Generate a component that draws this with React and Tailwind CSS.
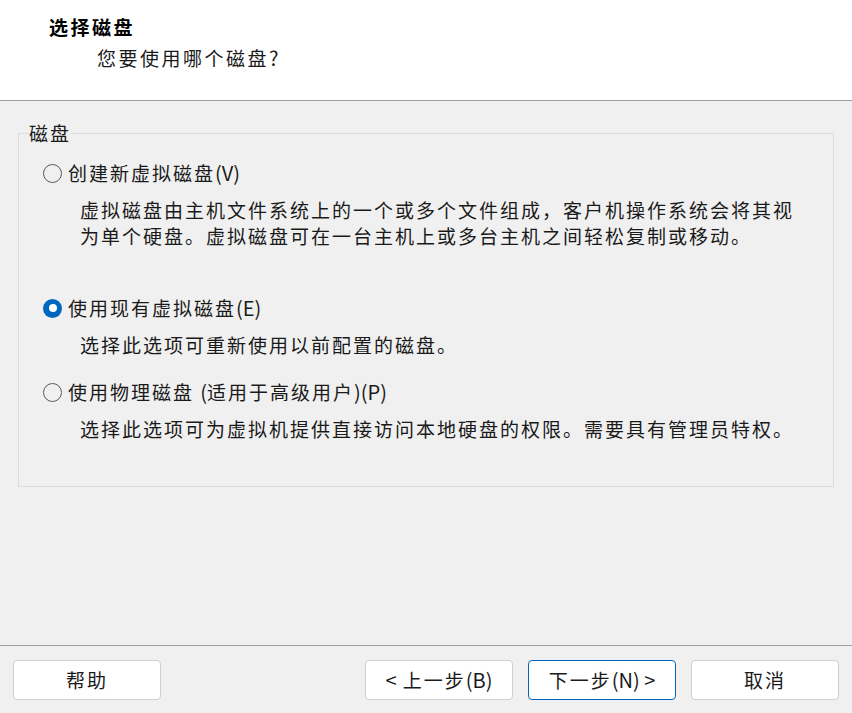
import React from "react";

const font = { fontFamily: '"Noto Sans CJK SC", "Noto Sans", sans-serif' };

function L({ children }) {
  return <span className="tracking-normal text-[20px]">{children}</span>;
}

function Radio({ checked }) {
  if (checked) {
    return (
      <span className="flex h-[19px] w-[19px] shrink-0 items-center justify-center rounded-full bg-[#0067c0]">
        <span className="h-[8px] w-[8px] rounded-full bg-white" />
      </span>
    );
  }
  return <span className="h-[19px] w-[19px] shrink-0 rounded-full border border-[#5a5a5a]" />;
}

function Option({ checked, label, children }) {
  return (
    <div>
      <div className="flex h-[26px] items-center pl-[24px]">
        <Radio checked={checked} />
        <span className="ml-[6px] text-[#1a1a1a]">{label}</span>
      </div>
      <div className="mt-[11px] pl-[61px] text-[#1a1a1a] leading-[26px]">{children}</div>
    </div>
  );
}

function Btn({ children, primary }) {
  return (
    <button
      className={
        "flex h-[40px] w-[148px] items-center justify-center rounded-[4px] bg-white text-[#1a1a1a] " +
        (primary ? "border border-[#0067c0]" : "border border-[#d0d0d0]")
      }
    >
      {children}
    </button>
  );
}

export default function App() {
  return (
    <div
      className="flex h-[713px] w-[852px] flex-col overflow-hidden bg-[#f0f0f0] text-[19px] tracking-[2px] leading-[26px]"
      style={font}
    >
      <div className="h-[101px] shrink-0 border-b border-[#a0a0a0] bg-white">
        <div className="pl-[49px] pt-[14px] font-bold text-black tracking-[2.5px]">选择磁盘</div>
        <div className="mt-[5px] pl-[97px] text-[#1a1a1a] tracking-[2.5px]">
          您要使用哪个磁盘<L>?</L>
        </div>
      </div>

      <div className="flex-1 px-[18px] pt-[19px]">
        <fieldset className="h-[367px] border border-[#dcdcdc] pl-[10px] pr-0">
          <legend className="px-0 text-[#1a1a1a]">磁盘</legend>
          <div className="-ml-[10px] pt-[14px]">
            <Option label={<>创建新虚拟磁盘<L>(V)</L></>}>
              <div>虚拟磁盘由主机文件系统上的一个或多个文件组成，客户机操作系统会将其视</div>
              <div>为单个硬盘。虚拟磁盘可在一台主机上或多台主机之间轻松复制或移动。</div>
            </Option>
            <div className="mt-[46px]">
              <Option checked label={<>使用现有虚拟磁盘<L>(E)</L></>}>
                <div>选择此选项可重新使用以前配置的磁盘。</div>
              </Option>
            </div>
            <div className="mt-[21px]">
              <Option label={<>使用物理磁盘 <L>(</L>适用于高级用户<L>)(P)</L></>}>
                <div>选择此选项可为虚拟机提供直接访问本地硬盘的权限。需要具有管理员特权。</div>
              </Option>
            </div>
          </div>
        </fieldset>
      </div>

      <div className="h-[68px] shrink-0 border-t border-[#a0a0a0] px-[13px] pt-[14px]">
        <div className="flex items-center">
          <Btn>帮助</Btn>
          <div className="ml-auto flex gap-[15px]">
            <Btn><L>&lt;</L>&nbsp;上一步<L>(B)</L></Btn>
            <Btn primary>下一步<L>(N) &gt;</L></Btn>
            <Btn>取消</Btn>
          </div>
        </div>
      </div>
    </div>
  );
}
